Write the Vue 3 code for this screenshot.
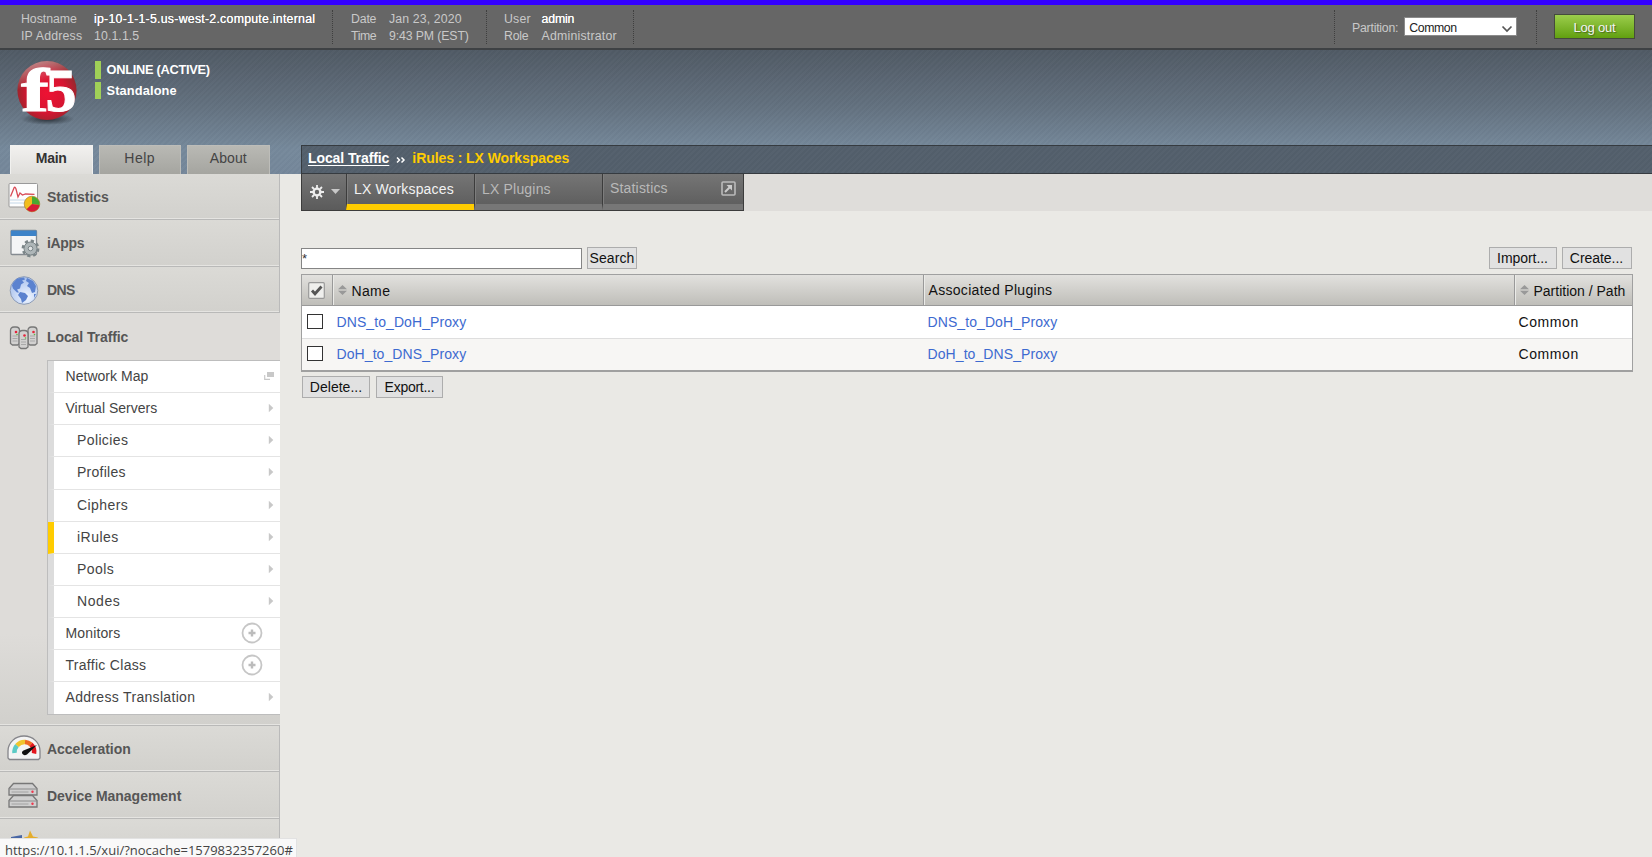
<script setup>
const info = [
  { cls: 'host', rows: [['Hostname', 55.5, 'ip-10-1-1-5.us-west-2.compute.internal', 221], ['IP Address', 61, '10.1.1.5', 45]] },
  { cls: 'date', rows: [['Date', 25, 'Jan 23, 2020', 72.5], ['Time', 25, '9:43 PM (EST)', 79.5]] },
  { cls: 'user', rows: [['User', 26.5, 'admin', 32.5], ['Role', 24, 'Administrator', 75]] },
]
const navTop = [
  { id: 'stats', label: 'Statistics', w: 61.5 },
  { id: 'iapps', label: 'iApps', w: 37 },
  { id: 'dns', label: 'DNS', w: 27.5 },
]
const navBottom = [
  { id: 'accel', label: 'Acceleration', w: 83.5 },
  { id: 'device', label: 'Device Management', w: 134 },
]
const subMenu = [
  { label: 'Network Map', w: 82.5, mark: 'window' },
  { label: 'Virtual Servers', w: 91.5, mark: 'arrow' },
  { label: 'Policies', w: 51, mark: 'arrow', nested: true },
  { label: 'Profiles', w: 48.5, mark: 'arrow', nested: true },
  { label: 'Ciphers', w: 51, mark: 'arrow', nested: true },
  { label: 'iRules', w: 41.5, mark: 'arrow', nested: true, active: true },
  { label: 'Pools', w: 37, mark: 'arrow', nested: true },
  { label: 'Nodes', w: 43, mark: 'arrow', nested: true },
  { label: 'Monitors', w: 54.5, mark: 'plus' },
  { label: 'Traffic Class', w: 80.5, mark: 'plus' },
  { label: 'Address Translation', w: 129.5, mark: 'arrow' },
]
const rows = [
  { name: 'DNS_to_DoH_Proxy', path: 'Common' },
  { name: 'DoH_to_DNS_Proxy', path: 'Common' },
]

/* Tracks a label so that it fills the given width. */
const vFit = {
  mounted(el, { value }) {
    const natural = el.getBoundingClientRect().width
    el.style.letterSpacing = `${(value + 0.3 - natural) / el.textContent.length}px`
  },
}
</script>

<template>
  <div class="page">
    <div class="accent"></div>
    <header class="topbar">
      <div v-for="g in info" :key="g.cls" class="info" :class="g.cls">
        <div v-for="(r, i) in g.rows" :key="i" class="info-row">
          <span class="key"><span v-fit="r[1]">{{ r[0] }}</span></span>
          <span v-fit="r[3]" :class="{ strong: i === 0 && g.cls !== 'date' }">{{ r[2] }}</span>
        </div>
      </div>
      <div class="partition">
        <span v-fit="46">Partition:</span>
        <div class="select">
          <span v-fit="47">Common</span>
          <svg width="12" height="8" viewBox="0 0 12 8"><path d="M1.5 1.5 6 6l4.500-4.500" fill="none" stroke="#555" stroke-width="1.700" /></svg>
        </div>
      </div>
      <div class="logout-wrap"><button class="logout"><span v-fit="41.500">Log out</span></button></div>
    </header>

    <section class="banner">
      <svg class="logo" width="66" height="68" viewBox="0 0 66 68">
        <defs>
          <radialGradient id="ball" cx=".5" cy=".55" r=".55">
            <stop offset="0" stop-color="#ee1233" /><stop offset=".6" stop-color="#d51531" /><stop offset="1" stop-color="#8d2a2c" />
          </radialGradient>
          <linearGradient id="gloss" x1="0" y1="0" x2="0.3" y2="1">
            <stop offset="0" stop-color="#fff" stop-opacity=".55" /><stop offset=".45" stop-color="#fff" stop-opacity="0" />
          </linearGradient>
          <radialGradient id="shade"><stop offset="0" stop-color="#20262c" stop-opacity=".9" /><stop offset="1" stop-color="#20262c" stop-opacity="0" /></radialGradient>
        </defs>
        <ellipse cx="33.500" cy="59" rx="27" ry="6" fill="url(#shade)" />
        <circle cx="33" cy="30.500" r="29.600" fill="url(#ball)" />
        <circle cx="33" cy="30.500" r="29.600" fill="url(#gloss)" />
        <text x="7" y="51" class="logo-text" textLength="28" lengthAdjust="spacingAndGlyphs">f</text>
        <text x="31.500" y="51" class="logo-text" textLength="31" lengthAdjust="spacingAndGlyphs">5</text>
      </svg>
      <div class="status">
        <div class="state"><span v-fit="103">ONLINE (ACTIVE)</span></div>
        <div class="state"><span v-fit="70">Standalone</span></div>
      </div>
    </section>

    <div class="body">
      <aside class="side">
        <div class="tabs">
          <div class="tab on"><span v-fit="30.500">Main</span></div>
          <div class="tab"><span v-fit="30.500">Help</span></div>
          <div class="tab"><span v-fit="36.500">About</span></div>
        </div>
        <div v-for="n in navTop" :key="n.id" class="nav">
          <svg v-if="n.id === 'stats'" width="34" height="34" viewBox="0 0 34 34">
            <rect x="2" y="3.500" width="28.500" height="23.500" rx="1" fill="#fdfdfd" stroke="#999" />
            <path d="M3 20h26M3 23h16" stroke="#c3d7e8" /><path d="M3.500 16.500 7 8q1-2 2 1l2 8 2-4 2.500 2 3-1 9 .3" fill="none" stroke="#d84a55" stroke-width="1.300" />
            <circle cx="25" cy="24" r="7.800" fill="#f2bd1d" stroke="#9a742c" stroke-width=".6" />
            <path d="M25 24V16.400A7.600 7.600 0 0 1 32.500 25z" fill="#48a832" /><path d="M25 24 32.500 25A7.600 7.600 0 0 1 19.500 29.300z" fill="#d51b37" />
          </svg>
          <svg v-else-if="n.id === 'iapps'" width="34" height="34" viewBox="0 0 34 34">
            <rect x="4" y="4.500" width="25.500" height="24" rx="1" fill="#f4f5f6" stroke="#858b91" stroke-width="1.300" />
            <path d="M4 4.500h25.500v5.500H4z" fill="#3d83c8" />
            <circle cx="23.500" cy="22.500" r="7.300" fill="none" stroke="#7b8588" stroke-width="3.200" stroke-dasharray="3.100 2.630" />
            <circle cx="23.500" cy="22.500" r="6.500" fill="#aeb6b8" stroke="#7b8588" /><circle cx="23.500" cy="22.500" r="2.300" fill="#e0e3e4" stroke="#7b8588" />
          </svg>
          <svg v-else width="34" height="34" viewBox="0 0 34 34">
            <defs><radialGradient id="sea" cx=".6" cy=".75" r=".8"><stop offset="0" stop-color="#f0f6ff" /><stop offset="1" stop-color="#a3bdec" /></radialGradient></defs>
            <circle cx="17" cy="17.500" r="13.800" fill="url(#sea)" stroke="#8c9bb5" />
            <path d="M6 10 10 5.500l7-1 1 2-3 1 2 2-3 2-1 4-3 1 2 3-2 0-4-4-1-3zM13 19l5 1 3 3-2 4-4 3-1-4-3-4zM20 5l6 3 3 5-1 6-3 1-2-5-3-2 2-3-3-2zM27 21l2 0-2 4z" fill="#5b82cf" />
          </svg>
          <span v-fit="n.w">{{ n.label }}</span>
        </div>
        <div class="nav open">
          <svg width="34" height="34" viewBox="0 0 34 34">
            <g v-for="(p, i) in [[3, 6.5], [20.5, 6.5], [11.500, 10]]" :key="i" :transform="`translate(${p[0]} ${p[1]})`">
              <path d="M.5 17V4Q.5 .5 4 .5h2Q9.500 .5 9.500 4v13l-2 1.500h-5z" fill="#d2d1d0" stroke="#777" stroke-width="1.300" />
              <path d="M2.500 9.500h5M2.500 12h5M2.500 14.500h5" stroke="#a9a9a9" /><circle cx="6" cy="5.500" r="1.300" fill="#e4263b" /><circle cx="7" cy="8" r=".8" fill="#5cba40" />
            </g>
          </svg>
          <span v-fit="81">Local Traffic</span>
        </div>
        <div class="sub-wrap">
          <ul class="sub">
            <li v-for="s in subMenu" :key="s.label" :class="{ nested: s.nested, active: s.active }">
              <span v-fit="s.w">{{ s.label }}</span>
              <svg v-if="s.mark === 'arrow'" class="mark" width="6" height="10" viewBox="0 0 6 10"><path d="M.8 .8 5.300 5 .8 9.200z" fill="#c8c8c8" /></svg>
              <svg v-else-if="s.mark === 'window'" class="mark" width="10" height="8" viewBox="0 0 10 8"><path d="M3 0h7v5H3z" fill="#c8c8c8" /><path d="M.7 3v4.300H6" fill="none" stroke="#c8c8c8" stroke-width="1.200" /></svg>
              <svg v-else class="mark plus" width="22" height="22" viewBox="0 0 22 22"><circle cx="11" cy="11" r="9.500" fill="#fff" stroke="#c6c6c6" stroke-width="1.800" /><path d="M11 7.500v7M7.500 11h7" stroke="#bcbcbc" stroke-width="2.400" /></svg>
            </li>
          </ul>
        </div>
        <div v-for="n in navBottom" :key="n.id" class="nav low">
          <svg v-if="n.id === 'accel'" width="34" height="34" viewBox="0 0 34 34">
            <path d="M1 26V19A16 15 0 0 1 33 19v7l-1.500 1.500h-29z" fill="#f4f4f4" stroke="#85858a" stroke-width="1.300" />
            <path d="M7.500 21A9.500 10 0 0 1 10 13.500" fill="none" stroke="#5ccbc6" stroke-width="4.500" />
            <path d="M10 13.500A10 10 0 0 1 18 10" fill="none" stroke="#f0c52d" stroke-width="4.500" />
            <path d="M18 10A10 10 0 0 1 24 12.500" fill="none" stroke="#ee6a22" stroke-width="4.500" />
            <path d="M24 12.500A10 10 0 0 1 27 21.500" fill="none" stroke="#e3151d" stroke-width="4.500" />
            <path d="M30 13 20 22.500q-3 1.500-4.500-.5t1-3.500z" fill="#111" />
          </svg>
          <svg v-else width="34" height="34" viewBox="0 0 34 34">
            <g v-for="y in [4.5, 16.5]" :key="y" :transform="`translate(1.5 ${y})`">
              <path d="M.5 5 5 0h19l4.500 5v6.500H.5z" fill="#cfcfcf" stroke="#777" stroke-width="1.300" /><path d="M1 5.500h27" stroke="#8c8c8c" /><path d="M3 8.500h17" stroke="#a2a2a2" /><circle cx="24" cy="8.300" r="1.200" fill="#f0364c" />
            </g>
          </svg>
          <span v-fit="n.w">{{ n.label }}</span>
        </div>
        <div class="nav last">
          <svg width="34" height="34" viewBox="0 0 34 34"><path d="m4 13 11-2v14H4z" fill="#4967a5" /><path d="m23 6.500 3 6 5 1-7 8-7-8 4-1z" fill="#e5ad2b" /></svg>
        </div>
      </aside>

      <main class="main">
        <div class="crumbs">
          <a v-fit="81">Local Traffic</a>
          <svg width="10" height="8" viewBox="0 0 10 8"><path d="M1 1.500 3.500 4 1 6.500M5.500 1.500 8 4 5.500 6.500" fill="none" stroke="#fff" stroke-width="1.500" /></svg>
          <span v-fit="156.500">iRules : LX Workspaces</span>
        </div>
        <div class="band">
          <div class="menu">
            <div class="gear">
              <svg width="14" height="14" viewBox="0 0 14 14"><circle cx="7" cy="7" r="3.400" fill="none" stroke="#eee" stroke-width="2.400" /><path d="M7 0v3M7 11v3M0 7h3M11 7h3M2 2l2 2M10 10l2 2M2 12l2-2M10 4l2-2" stroke="#eee" stroke-width="1.800" /></svg>
              <svg width="9" height="5" viewBox="0 0 9 5"><path d="M0 0h9L4.500 5z" fill="#c8c8c8" /></svg>
            </div>
            <div class="item on"><span v-fit="99.500">LX Workspaces</span></div>
            <div class="item"><span v-fit="68.500">LX Plugins</span></div>
            <div class="item stat">
              <span v-fit="57.500">Statistics</span>
              <svg width="15" height="15" viewBox="0 0 15 15"><rect x="1" y="1" width="13" height="13" rx="1" fill="none" stroke="#bbb" stroke-width="1.600" /><path d="M4 11 9 6" stroke="#ccc" stroke-width="2" /><path d="M5.500 4H11v5.500z" fill="#ccc" /></svg>
            </div>
          </div>
        </div>

        <div class="content">
          <div class="tools">
            <div class="field">*</div>
            <button class="btn search"><span v-fit="44.500">Search</span></button>
            <button class="btn import"><span v-fit="50.500">Import...</span></button>
            <button class="btn create"><span v-fit="53">Create...</span></button>
          </div>
          <div class="table">
            <div class="tr head">
              <div class="c-check">
                <svg width="17" height="17" viewBox="0 0 17 17"><rect x=".7" y=".7" width="15.600" height="15.600" rx="1" fill="#efefed" stroke="#999" stroke-width="1.200" /><path d="m4 8.500 3 3.300L13.500 4.500" fill="none" stroke="#555" stroke-width="2.800" /></svg>
              </div>
              <div class="c-name"><svg width="9" height="10" viewBox="0 0 9 10"><path d="M0 4.300h9L4.500 0zM0 5.700h9L4.500 10z" fill="#999" /></svg><span v-fit="38.500">Name</span></div>
              <div class="c-plug"><span v-fit="123.500">Associated Plugins</span></div>
              <div class="c-path"><svg width="9" height="10" viewBox="0 0 9 10"><path d="M0 4.300h9L4.500 0zM0 5.700h9L4.500 10z" fill="#999" /></svg><span v-fit="91.500">Partition / Path</span></div>
            </div>
            <div v-for="r in rows" :key="r.name" class="tr row">
              <div class="c-check"><i class="box"></i></div>
              <div class="c-name"><a v-fit="129.500">{{ r.name }}</a></div>
              <div class="c-plug"><a v-fit="129.500">{{ r.name }}</a></div>
              <div class="c-path"><span v-fit="60">{{ r.path }}</span></div>
            </div>
          </div>
          <div class="actions">
            <button class="btn del"><span v-fit="52">Delete...</span></button>
            <button class="btn exp"><span v-fit="49.500">Export...</span></button>
          </div>
        </div>
      </main>
    </div>
    <div class="link-status"><span v-fit="287.500">https://10.1.1.5/xui/?nocache=1579832357260#</span></div>
  </div>
</template>

<style>
html, body { margin: 0; height: 857px; overflow: hidden; }
</style>

<style scoped>
* { box-sizing: border-box; }
.page { position: relative; width: 1652px; height: 857px; overflow: hidden; display: flex; flex-direction: column; background: #eae9e5; font: 14px "Liberation Sans", Arial, sans-serif; color: #333; white-space: nowrap; }
svg { display: block; flex: none; }
.accent { height: 5px; background: #30f; flex: none; }
.topbar { height: 45px; flex: none; display: flex; align-items: flex-start; padding-top: 5px; background: #666; border-bottom: 2px solid #3e4144; font-size: 12.300px; color: #c9c9c9; }
.info { height: 34px; border-right: 1px dotted #3f3f3f; }
.info-row { display: flex; height: 17px; line-height: 18px; }
.key { flex: none; }
.host { width: 333px; padding-left: 21px; }
.host .key { width: 73px; }
.date { width: 154px; padding-left: 18px; }
.date .key { width: 38px; }
.user { width: 147px; padding-left: 17px; }
.user .key { width: 37.500px; }
.strong { color: #fff; text-shadow: 0 0 .5px #fff; }
.partition { margin-left: auto; width: 203px; height: 34px; border: dotted #3f3f3f; border-width: 0 1px; padding-left: 17px; display: flex; align-items: center; gap: 6px; }
.partition > span { padding-top: 1px; }
.select { width: 113px; height: 19px; background: #fff; border: 1px solid #8b8b8b; color: #222; display: flex; align-items: center; justify-content: space-between; padding: 2px 3px 0 4px; margin-top: -1px; }
.select svg { margin-top: 2px; }
.logout-wrap { width: 115px; padding: 4px 0 0 17px; }
.logout { width: 81px; height: 25px; padding: 1px 0 0; display: flex; align-items: center; justify-content: center; border: 1px solid #454b3d; background: linear-gradient(#9bcd4c, #62a010); color: #f4f4f4; font: 13px "Liberation Sans", sans-serif; text-shadow: 1px 1px 1px #4b6b22; }
.banner { height: 123.500px; flex: none; display: flex; padding: 10px 0 0 14px; background: repeating-linear-gradient(135deg, rgba(255,255,255,.015) 0 2px, rgba(0,0,0,.015) 2px 4px), linear-gradient(#505a65, #63717f 45%, #76899b 80%, #75879a); }
.logo { overflow: visible; }
.logo-text { font: bold 61px "Liberation Serif", serif; fill: #fff; stroke: #fff; stroke-width: 1px; }
.status { padding: 1px 0 0 14.500px; display: flex; flex-direction: column; gap: 3px; }
.state { height: 17.500px; line-height: 18px; border-left: 6px solid #a0d057; padding-left: 6px; font-size: 12.800px; font-weight: bold; color: #fff; }
.body { flex: 1; min-height: 0; display: flex; }
.side { width: 280px; flex: none; background: #dedcd9; }
.tabs { display: flex; gap: 6px; height: 28.500px; margin-top: -28.500px; padding-left: 10px; }
.tab { width: 82.500px; height: 28.500px; line-height: 25px; text-align: center; background: linear-gradient(#b9b9b4, #a5a5a0); border: 1px solid #bdbdb9; border-bottom: 0; color: #444; }
.tab.on { background: linear-gradient(#f2f1ef, #dfdedb); border-color: #f1f1ef; font-weight: bold; color: #333; }
.nav { height: 46.500px; display: flex; align-items: center; gap: 6px; padding: 1px 0 0 7px; background: linear-gradient(#dbdad6, #d2d1cd); border-right: 1px solid #bababa; border-bottom: 1px solid #b9b9b8; box-shadow: inset 0 -1px #e5e4e1; font-weight: bold; color: #565656; }
.nav.open { border: 0; background: #dedcd9; box-shadow: none; height: 47px; padding-top: 0; }
.nav.low { padding-top: 2px; }
.sub-wrap { height: 365.500px; padding-left: 47px; background: linear-gradient(#dedcd9 75%, #d1d0cc); border-bottom: 1px solid #b9b9b8; box-shadow: inset 0 -1px #e5e4e1; }
.sub { list-style: none; margin: 0; padding: 0; border: 1px solid #bdbdbd; border-right: 0; height: 354.500px; display: flex; flex-direction: column; }
.sub li { flex: 1; min-height: 0; display: flex; align-items: center; justify-content: space-between; padding: 0 6px 1px 11.500px; background: #fff; border-left: 6px solid #dcdcdc; border-bottom: 1px solid #e4e4e4; color: #444; }
.sub li:last-child { border-bottom: 0; }
.sub li.nested { padding-left: 23px; }
.sub li.active { border-left-color: #fc0; }
.mark.plus { margin-right: 11px; }
.nav.last { padding-top: 0; }
.main { flex: 1; min-width: 0; }
.crumbs { margin: -28.500px 0 0 21px; height: 28.500px; display: flex; align-items: center; padding: 0 0 2px 6px; background: repeating-linear-gradient(135deg, rgba(255,255,255,.015) 0 2px, rgba(0,0,0,.015) 2px 4px), #535f6c; border: 1px solid #363b40; border-right: 0; font-weight: bold; color: #fc0; }
.crumbs a { color: #fff; text-decoration: underline; text-underline-offset: 2px; }
.crumbs svg { margin: 4px 6px 0 7px; }
.band { height: 37.500px; margin-left: 21px; background: #dfddda; }
.menu { width: 443px; height: 37.500px; display: flex; border: 1px solid #3c3c3c; border-top: 0; background: linear-gradient(#757575, #5b5b5b); }
.gear { width: 44px; display: flex; align-items: center; gap: 7px; padding-left: 8px; }
.item { width: 128px; border-left: 1px solid #3c3c3c; border-bottom: 6px solid #777; padding-left: 7px; line-height: 31px; color: #b9b9b9; box-shadow: inset 1px 0 #7d7d7d; }
.item.on { color: #f2f2f2; border-bottom-color: #fc0; }
.item.stat { flex: 1; display: flex; align-items: center; justify-content: space-between; padding-right: 7px; }
.content { padding: 36px 19.500px 0 21px; }
.tools { display: flex; height: 22px; margin-bottom: 5px; }
.field { width: 281px; height: 20.500px; margin-top: 1px; border: 1px solid #858585; background: #fff; padding-left: 0; line-height: 19px; font-size: 13px; }
.btn { height: 22px; padding: 0; display: flex; align-items: center; justify-content: center; border: 1px solid #adadad; background: #e1e1e1; font: 14px/20px "Liberation Sans", sans-serif; color: #111; }
.search { width: 50px; margin-left: 5px; }
.import { width: 68px; margin-left: auto; }
.create { width: 70px; margin: 0 1px 0 5px; }
.table { border: 1px solid #a0a0a0; border-bottom-width: 2px; color: #111; }
.tr { display: grid; grid-template-columns: 29.500px 591px 591px 1fr; }
.tr > div { display: flex; align-items: center; }
.head { height: 31px; background: linear-gradient(#e2e1de, #bfbeb9); border-bottom: 1px solid #999; }
.head > div + div { border-left: 1px solid #999; box-shadow: inset 1px 0 #ebebe8; }
.c-check { padding-left: 5px; }
.head .c-check { padding-left: 6px; }
.c-name { padding-left: 5px; }
.head .c-name, .head .c-path { gap: 5px; }
.head .c-name span, .head .c-path span { padding-top: 1px; }
.c-plug { padding-left: 5px; }
.c-path { padding-left: 5px; }
.row { height: 32px; background: #fff; padding-bottom: 1px; }
.row + .row { background: #f7f6f4; border-top: 1px solid #dedede; padding-bottom: 2px; }
.row a { color: #3d6ad0; }
.box { width: 15.500px; height: 15.500px; border: 1.500px solid #333; background: #fff; }
.actions { display: flex; gap: 6px; padding: 4px 0 0 1px; }
.del { width: 68px; }
.exp { width: 67px; }
.link-status { position: absolute; left: 0; bottom: 0; width: 297px; height: 19px; padding-left: 5px; background: #f9f9f9; border-top: 1px solid #e2e2e2; border-right: 1px solid #e2e2e2; font: 13px/22px "Open Sans", "Noto Sans", sans-serif; color: #444; }
</style>
